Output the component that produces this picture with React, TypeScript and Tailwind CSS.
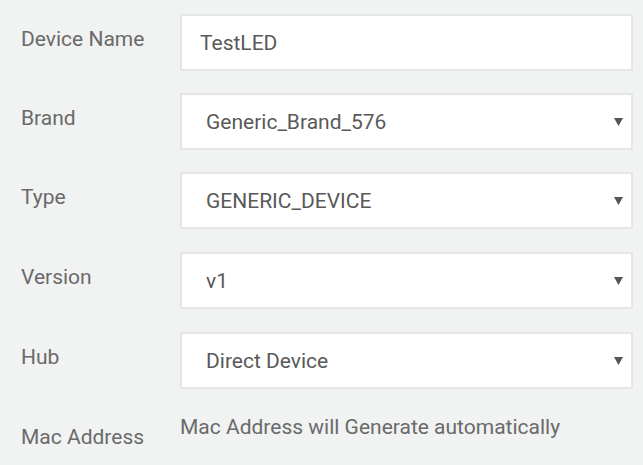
const fields = [
  { label: "Device Name", value: "TestLED", select: false, gap: "" },
  { label: "Brand", value: "Generic_Brand_576", select: true, gap: "mt-[22px]" },
  { label: "Type", value: "GENERIC_DEVICE", select: true, gap: "mt-[22px]" },
  { label: "Version", value: "v1", select: true, gap: "mt-[23px]" },
  { label: "Hub", value: "Direct Device", select: true, gap: "mt-[23px]" },
]

function Caret() {
  return (
    <svg width="9" height="9" viewBox="0 0 9 9" className="shrink-0">
      <path d="M0 1h9L4.5 9z" fill="#555" />
    </svg>
  )
}

export default function App() {
  return (
    <div
      className="min-h-screen w-full bg-[#f1f2f2] pt-[14px] pr-[10px] text-[21px] leading-6"
      style={{ fontFamily: "Roboto, 'Liberation Sans', sans-serif" }}
    >
      <div className="flex flex-col">
        {fields.map((f) => (
          <div key={f.label} className={`flex items-start ${f.gap}`}>
            <div className="w-[180px] shrink-0 pl-[21px] pt-[13px] text-[#6a6a6a]">{f.label}</div>
            <div
              className={`flex h-[57px] flex-1 items-center justify-between border-2 border-[#e4e6e8] bg-white pr-[8px] text-[#595959] ${
                f.select ? "pl-[24px]" : "pl-[18px]"
              }`}
            >
              <span>{f.value}</span>
              {f.select && <Caret />}
            </div>
          </div>
        ))}
        <div className="mt-[22px] flex items-start">
          <div className="w-[180px] shrink-0 pl-[21px] pt-[14px] text-[#6a6a6a]">Mac Address</div>
          <div className="pt-[4px] text-[#6a6a6a]">Mac Address will Generate automatically</div>
        </div>
      </div>
    </div>
  )
}
